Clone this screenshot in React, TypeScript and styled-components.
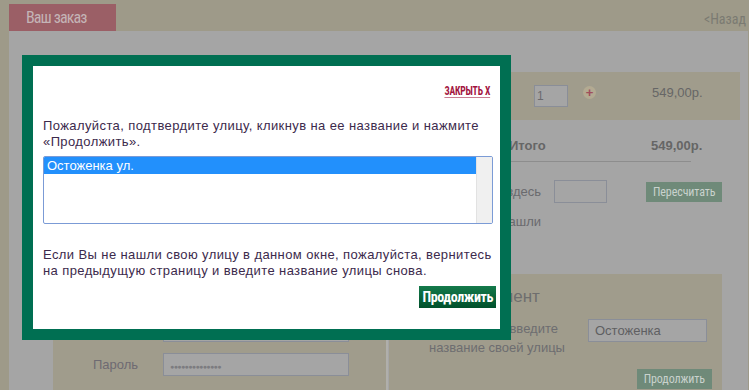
import React from 'react'
import styled, { createGlobalStyle } from 'styled-components'

const GlobalStyle = createGlobalStyle`
  html, body {
    margin: 0;
    padding: 0;
  }
  body {
    width: 749px;
    height: 390px;
    overflow: hidden;
    background: #9e9a89;
    font-family: 'Liberation Sans', Arial, sans-serif;
  }
`

const narrow = `'Roboto Condensed', 'Open Sans Condensed', 'DejaVu Sans Condensed', sans-serif`

const Page = styled.div`
  position: relative;
  width: 749px;
  height: 390px;
  display: flex;
  flex-direction: column;
`
const TopBar = styled.div`
  height: 31px;
  display: flex;
  align-items: flex-end;
  justify-content: space-between;
  padding-left: 9px;
`
const Tab = styled.div`
  width: 90px;
  height: 27px;
  padding-left: 17px;
  background: #9b5f66;
  color: #c4b4b6;
  font-family: ${narrow};
  font-size: 16px;
  letter-spacing: -0.9px;
  line-height: 27px;
`
const BackLink = styled.a`
  align-self: flex-start;
  margin-top: 11px;
  margin-right: 3px;
  color: #7b7a72;
  font-family: ${narrow};
  font-size: 14px;
  text-decoration: none;
`
const Main = styled.div`
  flex: 1;
  display: flex;
  margin: 0 1px 0 9px;
  padding-left: 44px;
  background: #a5a5a5;
  overflow: hidden;
`
const LeftColumn = styled.div`
  width: 335px;
  flex-shrink: 0;
  display: flex;
  flex-direction: column;
  justify-content: flex-end;
`
const LoginPanel = styled.div`
  height: 116px;
  padding: 45px 0 0 40px;
  box-sizing: border-box;
  background: #a09c8c;
  border-right: 2px solid #b0afab;
  display: flex;
  flex-direction: column;
  gap: 11px;
`
const FieldRow = styled.div`
  display: flex;
  align-items: center;
`
const FieldLabel = styled.span`
  width: 70px;
  color: #6e6a72;
  font-size: 13px;
`
const FakeInput = styled.div<{ $width: number }>`
  width: ${p => p.$width}px;
  height: 23px;
  flex-shrink: 0;
  box-sizing: border-box;
  border: 1px solid #8a8e98;
  background: #a5a5a5;
  color: #5f5f62;
  font-size: 13px;
  line-height: 21px;
  padding-left: 6px;
`
const Dots = styled.span`
  font-size: 7px;
  letter-spacing: -0.6px;
  color: #7c7c80;
`
const RightColumn = styled.div`
  flex: 1;
  min-width: 0;
  margin-left: 1px;
  display: flex;
  flex-direction: column;
  padding-top: 41px;
`
const ProductRow = styled.div`
  height: 48px;
  margin-right: 8px;
  padding-left: 145px;
  background: #a09c8c;
  display: flex;
  align-items: center;
`
const QtyInput = styled(FakeInput)`
  height: 22px;
  padding-left: 2px;
  font-size: 12px;
  color: #6a6a6e;
`
const PlusIcon = styled.span`
  width: 13px;
  height: 13px;
  margin: 0 0 8px 15px;
  border-radius: 50%;
  background: #b3aa92;
  color: #a04e5c;
  font-size: 13px;
  font-weight: bold;
  line-height: 13px;
  text-align: center;
`
const Price = styled.span<{ $bold?: boolean }>`
  flex-shrink: 0;
  color: #666;
  font-size: 13px;
  font-weight: ${p => (p.$bold ? 'bold' : 'normal')};
`
const ProductPrice = styled(Price)`
  margin: 0 0 8px 56px;
`
const TotalRow = styled.div`
  height: 31px;
  margin: 10px 57px 0 0;
  border-bottom: 1px solid #8d8d8d;
  display: flex;
  align-items: center;
  padding-left: 120px;
`
const TotalLabel = styled.span`
  width: 142px;
  flex-shrink: 0;
  color: #666;
  font-size: 13px;
  font-weight: bold;
`
const RecalcRow = styled.div`
  margin-top: 18px;
  display: flex;
  align-items: center;
`
const SideLabel = styled.span`
  width: 152px;
  flex-shrink: 0;
  text-align: right;
  white-space: nowrap;
  color: #6a6a6e;
  font-size: 13px;
`
const DimButton = styled.span`
  height: 20px;
  padding: 0 7px;
  background: #6f8a79;
  color: #c9d2cd;
  font-family: ${narrow};
  font-size: 12px;
  letter-spacing: -0.1px;
  line-height: 20px;
`
const RecalcInput = styled(FakeInput)`
  margin: 0 39px 0 13px;
`
const NoteRow = styled.div`
  margin-top: 11px;
  display: flex;
`
const AddressPanel = styled.div`
  margin: auto 26px 0 0;
  height: 116px;
  padding: 12px 10px 0 40px;
  box-sizing: border-box;
  background: #a09c8c;
`
const PanelTitle = styled.div`
  color: #6e6e6e;
  font-size: 17px;
  line-height: 21px;
`
const AddressRow = styled.div`
  margin-top: 12px;
  display: flex;
`
const AddressHint = styled.div`
  color: #6d6d70;
  font-size: 13px;
  line-height: 19px;
`
const AddressInput = styled(FakeInput)`
  margin: 0 5px 0 auto;
`
const AddressActions = styled.div`
  margin-top: 12px;
  display: flex;
  justify-content: flex-end;
`

/* modal */
const Modal = styled.div`
  position: absolute;
  left: 22px;
  top: 55px;
  width: 453px;
  height: 245px;
  border: 11px solid #006f52;
  background: #fff;
  padding: 18px 4px 0 10px;
  display: flex;
  flex-direction: column;
`
const CloseLink = styled.a`
  align-self: flex-end;
  display: inline-block;
  margin-right: 6px;
  color: #a3153f;
  font-family: ${narrow};
  font-weight: bold;
  font-size: 12px;
  letter-spacing: -0.2px;
  line-height: 14px;
  text-decoration: underline;
  text-decoration-color: #c97d92;
  text-underline-offset: 2px;
  transform: scaleX(0.8);
  transform-origin: right center;
`
const Text = styled.p<{ $top: number }>`
  margin: ${p => p.$top}px 0 0;
  width: 452px;
  color: #3c2a4c;
  font-family: 'Liberation Sans', Arial, sans-serif;
  font-size: 13px;
  line-height: 16px;
  letter-spacing: 0.4px;
`
const ListBox = styled.div`
  margin-top: 6px;
  width: 450px;
  height: 68px;
  box-sizing: border-box;
  border: 1px solid #7b9bd6;
  border-radius: 2px;
  display: flex;
  overflow: hidden;
`
const Options = styled.div`
  flex: 1;
`
const Option = styled.div<{ $selected?: boolean }>`
  height: 17px;
  padding-left: 3px;
  background: ${p => (p.$selected ? '#2290fc' : 'transparent')};
  color: ${p => (p.$selected ? '#fff' : '#222')};
  font-size: 13px;
  line-height: 17px;
`
const ScrollTrack = styled.div`
  width: 15px;
  background: #f0f0f0;
  border-left: 1px solid #e2e2e2;
`
const Actions = styled.div`
  margin-top: 7px;
  display: flex;
  justify-content: flex-end;
`
const GreenButton = styled.button`
  height: 22px;
  padding: 0 3px;
  border: 0;
  background: linear-gradient(#147a4b, #00502b);
  color: #fff;
  font-family: ${narrow};
  font-weight: bold;
  font-size: 14px;
  letter-spacing: -0.4px;
  line-height: 22px;
  cursor: pointer;
`

export default function App() {
  return (
    <Page>
      <GlobalStyle />
      <TopBar>
        <Tab>Ваш заказ</Tab>
        <BackLink href="#">&lt;Назад</BackLink>
      </TopBar>
      <Main>
        <LeftColumn>
          <LoginPanel>
            <FieldRow>
              <FieldLabel>E-mail</FieldLabel>
              <FakeInput $width={186} />
            </FieldRow>
            <FieldRow>
              <FieldLabel>Пароль</FieldLabel>
              <FakeInput $width={186}>
                <Dots>{'●'.repeat(14)}</Dots>
              </FakeInput>
            </FieldRow>
          </LoginPanel>
        </LeftColumn>
        <RightColumn>
          <ProductRow>
            <QtyInput $width={34}>1</QtyInput>
            <PlusIcon>+</PlusIcon>
            <ProductPrice>549,00р.</ProductPrice>
          </ProductRow>
          <TotalRow>
            <TotalLabel>Итого</TotalLabel>
            <Price $bold>549,00р.</Price>
          </TotalRow>
          <RecalcRow>
            <SideLabel>Введите промокод здесь</SideLabel>
            <RecalcInput $width={53} />
            <DimButton>Пересчитать</DimButton>
          </RecalcRow>
          <NoteRow>
            <SideLabel>Как вы нас нашли</SideLabel>
          </NoteRow>
          <AddressPanel>
            <PanelTitle>Новый клиент</PanelTitle>
            <AddressRow>
              <AddressHint>
                Пожалуйста, введите
                <br />
                название своей улицы
              </AddressHint>
              <AddressInput $width={119}>Остоженка</AddressInput>
            </AddressRow>
            <AddressActions>
              <DimButton>Продолжить</DimButton>
            </AddressActions>
          </AddressPanel>
        </RightColumn>
      </Main>

      <Modal>
        <CloseLink href="#">ЗАКРЫТЬ Х</CloseLink>
        <Text $top={20}>
          Пожалуйста, подтвердите улицу, кликнув на ее название и нажмите «Продолжить».
        </Text>
        <ListBox>
          <Options>
            <Option $selected>Остоженка ул.</Option>
          </Options>
          <ScrollTrack />
        </ListBox>
        <Text $top={23}>
          Если Вы не нашли свою улицу в данном окне, пожалуйста, вернитесь на предыдущую страницу и
          введите название улицы снова.
        </Text>
        <Actions>
          <GreenButton>Продолжить</GreenButton>
        </Actions>
      </Modal>
    </Page>
  )
}
